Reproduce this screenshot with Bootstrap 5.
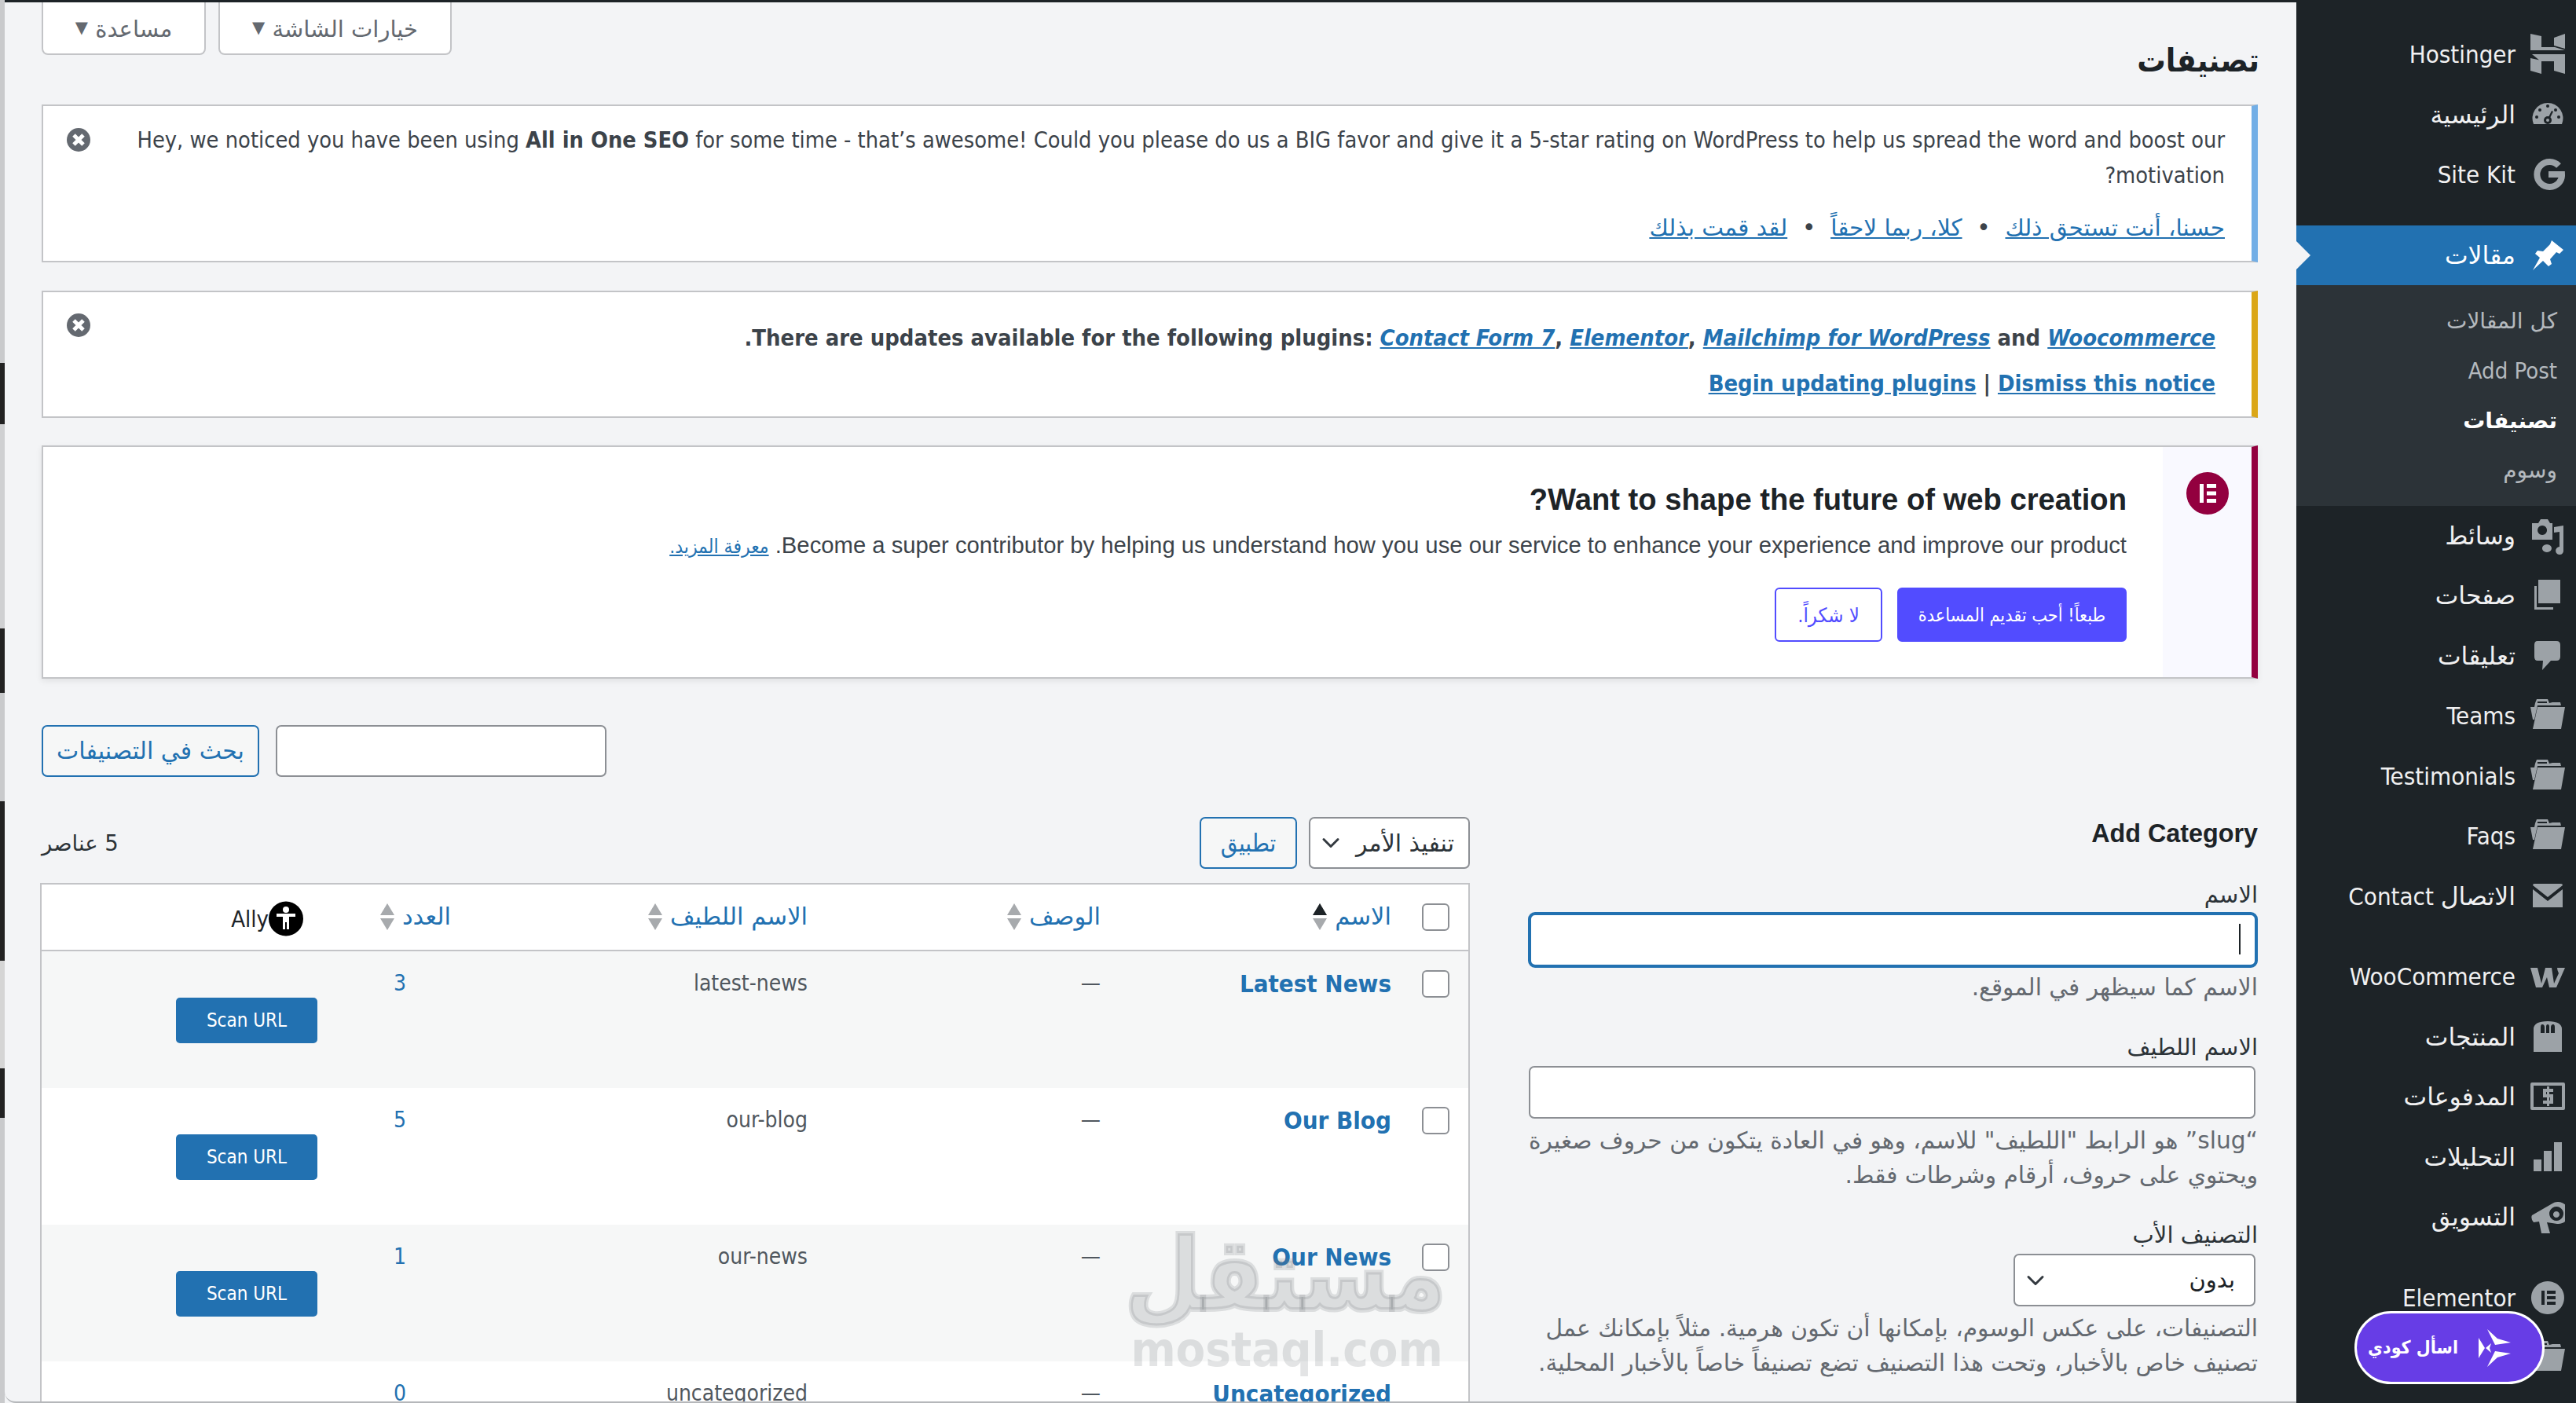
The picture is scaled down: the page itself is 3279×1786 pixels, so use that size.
<!DOCTYPE html>
<html lang="ar" dir="rtl">
<head>
  <meta charset="UTF-8">
  <title>تصنيفات</title>
  <meta name="viewport" content="width=device-width, initial-scale=1">
  <link href="https://cdn.jsdelivr.net/npm/bootstrap@5.3.3/dist/css/bootstrap.min.css" rel="stylesheet">
  <style>
    html, body { height: 100%; }
    body {
      overflow: hidden; background: #f3f4f6; color: #3c434a; position: relative;
      font: 28.72px/45px "DejaVu Sans Condensed", "DejaVu Sans", sans-serif;
    }
    a { color: #2271b1; }
    .ar { font-family: "DejaVu Sans", sans-serif; }

    /* sidebar */
    .wp-side { width: 356px; flex: none; background: #1d2327; padding-top: 31px; color: #f0f0f1; }
    .wp-item { height: 76.5px; padding-right: 14px; gap: 19px; color: #f0f0f1; text-decoration: none; font-size: 31px; line-height: 40px; white-space: nowrap; }
    .wp-item .ar { font-size: 31.5px; }
    .wp-ico { width: 44px; height: 52px; flex: none; fill: #9ca2a7; }
    .wp-gap { margin-top: 26px; }
    .wp-item.is-on { height: 76px; background: #2271b1; color: #fff; }
    .wp-item.is-on .wp-ico { fill: #fff; }
    .wp-item.is-on::after {
      content: ""; position: absolute; left: 0; top: 20px; border: solid transparent;
      border-width: 18px 0 18px 18px; border-left-color: #f3f4f6;
    }
    .wp-sub { background: #2c3338; padding: 14px 24px 13px 0; }
    .wp-sub a { display: block; height: 63.5px; line-height: 64px; font-size: 29px; color: #b4b9be; text-decoration: none; }
    .wp-sub a.ar { font-size: 28px; }
    .wp-sub a.is-on { color: #fff; font-weight: 700; }

    /* main column */
    .wp-main { flex: 1; min-width: 0; padding: 3px 49px 0 47px; border-top: 3px solid #1d2327; border-bottom: 2px solid #b5b7ba; border-bottom-left-radius: 14px; height: 100%; overflow: hidden; }
    .wp-strip { width: 6px; flex: none; background: linear-gradient(#c9cacc 0 462px, #222 462px 540px, #cfd0d2 540px 800px, #222 800px 882px, #c9cacc 882px 1020px, #222 1020px 1223px, #d5d5d5 1223px 1360px, #222 1360px 1423px, #c9cacc 1423px); }
    .wp-tab { height: 67px; margin-top: -3px; background: #fff; border: 2px solid #c3c4c7; border-top: 0; border-radius: 0 0 8px 8px; color: #646970; font-size: 29px; line-height: 64px; text-align: center; white-space: nowrap; }
    .wp-tab.opt { width: 297px; }
    .wp-tab.hlp { width: 209px; }
    .wp-tri { font-size: 21px; vertical-align: 5px; }
    .wp-title { height: 63px; line-height: 14px; font-size: 40.5px; font-weight: 700; color: #1d2327; margin: 0 -2px 0 0; }
    .wp-notice { position: relative; background: #fff; border: 2px solid #c3c4c7; border-right-width: 8px; margin-bottom: 36px; }
    .wp-notice p { margin: 0; }
    .wp-x { position: absolute; left: 29px; width: 32px; height: 32px; }
    .n-blue { border-right-color: #72aee6; padding: 21px 34px 19px 116px; }
    .n-blue .links { margin-top: 22px; font-size: 29.5px; }
    .n-yellow { border-right-color: #dba617; padding: 36px 46px 19px 60px; font-weight: 700; font-size: 28.9px; margin-bottom: 35px; }
    .n-yellow .links { margin-top: 13px; }
    .n-el { border-right-color: #93003f; font-family: "Liberation Sans", sans-serif; box-shadow: 0 3px 8px rgba(0,0,0,.08); margin-bottom: 0; height: 297px; }
    .n-el-side { width: 113px; flex: none; background: #f9f9ff; padding-top: 32px; }
    .n-el-body { padding: 45px 46px 0 0; }
    .n-el-body h3 { font-size: 38.2px; line-height: 44px; font-weight: 700; color: #1d2327; margin: 0 0 14px; font-family: inherit; }
    .n-el-body p { font-size: 29.25px; line-height: 44px; }
    .n-el-body p a { font: 24.5px "DejaVu Sans Condensed", sans-serif; }
    .n-el-btns { gap: 19px; margin-top: 32px; }
    .btn-el { height: 69px; font: 23.3px/30px "DejaVu Sans Condensed", sans-serif; width: 292px; justify-content: center; border: 2px solid #524cff; border-radius: 6px; display: flex; align-items: center; white-space: nowrap; }
    .btn-el.solid { background: #524cff; color: #fff; }
    .btn-el.line { background: #fff; color: #524cff; width: 137px; font-size: 25.5px; }

    /* wp form bits */
    .wp-btn { height: 66px; background: #f6f7f7; border: 2px solid #2271b1; border-radius: 7px; color: #2271b1; font-size: 30px; line-height: 50px; padding: 0; white-space: nowrap; }
    .wp-btn.find { width: 277px; }
    .wp-btn.apply { width: 124px; font-size: 31px; }
    .wp-input.form-control { height: 67px; border: 2px solid #8c8f94; border-radius: 7px; background: #fff; box-shadow: none; }
    .wp-search { margin: 59px 0 51px; gap: 21px; }
    .wp-search .wp-input { width: 421px; height: 66px; }
    .col-form-wp { width: 929px; flex: none; }
    .col-table-wp { width: 1818px; flex: none; margin-right: 74px; }
    .col-form-wp h2 { font: 700 32.3px/42px "Liberation Sans", sans-serif; color: #1d2327; margin: 0 0 36px; }
    .col-form-wp label { display: block; color: #2c3338; font-size: 29px; line-height: 42px; margin-bottom: 1px; }
    .wp-help + label { margin-bottom: 3px; }
    .wp-focus.form-control { height: 71px; border: 4px solid #2271b1; border-radius: 9px; box-shadow: none; width: 929px; position: relative; }
    .wp-caret { position: absolute; left: 905px; top: 15px; width: 2px; height: 39px; background: #1d2327; }
    .wp-help { color: #646970; font-size: 29.7px; line-height: 44px; margin: 6px 0 33px; }
    .position-relative + .wp-help { margin-top: 3px; }
    .wp-inset { margin-right: 3px; }
    .wp-input.form-control.wp-inset { width: 925px; }
    .wp-select.form-select { width: 308px; height: 67px; border: 2px solid #8c8f94; border-radius: 7px; color: #1d2327; font-size: 29px; padding: 0 24px 0 60px; background-position: left 14px center; background-size: 24px; }
    .wp-select.wp-bulk { width: 205px; height: 66px; padding: 0 18px 0 44px; font-size: 30px; color: #2c3338; }
    .wp-tools { height: 66px; margin-bottom: 18px; gap: 15px; }
    .wp-count { margin-right: auto; font-size: 27.5px; line-height: 66px; color: #2c3338; }

    /* categories table */
    .cat-table.table { width: 1818px; table-layout: fixed; border: 2px solid #c3c4c7; background: #fff; margin: 0; font-size: 28px; line-height: 34px; color: #50575e; }
    .cat-table.table > :not(caption) > * > * { padding: 24px 18px 0; border: 0; box-shadow: none; background: transparent; color: inherit; vertical-align: top; text-align: right; }
    .cat-table.table > :not(caption) > * > .cat-box { padding-right: 24px; }
    .cat-table thead th { height: 85px; font-weight: 400; border-bottom: 2px solid #c3c4c7 !important; }
    .cat-table thead a { text-decoration: none; display: inline-flex; align-items: center; gap: 10px; font-size: 30.5px; }
    .cat-table tbody tr:nth-child(odd) { background: #f6f7f7; }
    .cat-table .cat-name a { font-weight: 700; font-size: 31px; text-decoration: none; }
    .cat-table .cat-num { padding-right: 75px !important; }
    .cat-table .cat-ally { padding: 59px 0 57px !important; }
    .cat-table .cat-ally-th { padding-top: 21px !important; }
    .wp-check.form-check-input { width: 35px; height: 35px; margin: 0; float: none; border: 2px solid #8c8f94; border-radius: 6px; background-color: #fff; }
    .wp-scan { height: 58px; width: 180px; background: #2271b1; border: 0; border-radius: 5px; color: #fff; font-size: 24px; line-height: 58px; padding: 0; }
    .ally-head { color: #1d2327; font-size: 29px; }
    .ally-dot { width: 44px; height: 45px; }

    /* over the page */
    .kodee { position: absolute; left: 2997px; top: 1669px; width: 242px; height: 93px; background: #673de6; border: 3px solid #fff; border-radius: 47px; color: #fff; font-size: 23px; font-weight: 700; gap: 26px; padding: 0 40px 0 0; }
    .mark-wp { position: absolute; left: 1438px; top: 1558px; width: 400px; text-align: center; color: rgba(115,120,125,.2); font-weight: 700; pointer-events: none; }
    .mark-wp .big { font: 700 128px/130px "DejaVu Sans", sans-serif; transform: translateX(28px) scaleX(.875); -webkit-text-stroke: 6px rgba(115,120,125,.2); white-space: nowrap; }
    .mark-wp .url { font: 700 61px/60px "DejaVu Sans Condensed", sans-serif; direction: ltr; }
  </style>
</head>
<body class="d-flex">

<svg width="0" height="0" class="position-absolute">
  <symbol id="i-folder" viewBox="0 0 44 52"><path d="M6 10 8 5 22 5 24 10 28 9 38 9 39 13 9 13 5 31 3 31 0 15 5 15ZM9 15 44 15 39 43 3 43Z"/><path d="M9 8H21V10H9Z" fill="#1d2327"/></symbol>
  <symbol id="i-x" viewBox="0 0 32 32"><circle cx="16" cy="16" r="15" fill="#646970"/><path d="M10 10 22 22M22 10 10 22" stroke="#fff" stroke-width="5"/></symbol>
  <symbol id="i-sort" viewBox="0 0 18 34"><path d="M9 0 18 15H0Z" fill="#a7aaad"/><path d="M0 19H18L9 34Z" fill="#a7aaad"/></symbol>
</svg>

<!-- sidebar -->
<aside class="wp-side">
  <a class="wp-item d-flex align-items-center" href="#"><svg class="wp-ico" viewBox="0 0 44 52"><path d="M0 0 14 3V17H31L44 21H0ZM30 5 44 0V19L30 15ZM0 31 14 34V51L0 47ZM2 26H44V51L30 47V35H13Z"/></svg><span>Hostinger</span></a>
  <a class="wp-item d-flex align-items-center" href="#"><svg class="wp-ico" viewBox="0 0 44 52"><path d="M4 38A19.500 19.500 0 1 1 40 38Z"/><g fill="#1d2327"><circle cx="22" cy="15" r="2"/><circle cx="12" cy="20" r="2"/><circle cx="32" cy="20" r="2"/><circle cx="8" cy="29" r="2"/><circle cx="36" cy="29" r="2"/><path d="M27 21 29 22 25 30 23 29Z"/><circle cx="22" cy="33" r="5"/></g><circle cx="22" cy="33" r="2" fill="#9ca2a7"/></svg><span class="ar">الرئيسية</span></a>
  <a class="wp-item d-flex align-items-center" href="#"><svg class="wp-ico" viewBox="0 0 44 52"><path d="M36 15A16 16 0 1 0 36 37 15 15 0 0 0 40 26H23" fill="none" stroke="#9ca2a7" stroke-width="8"/></svg><span>Site Kit</span></a>

  <div class="wp-gap">
    <a class="wp-item is-on d-flex align-items-center position-relative" href="#"><svg class="wp-ico" viewBox="0 0 44 52"><path d="M27 7 42 19 37 24 33 22 25 31 27 37 23 40 16 33 3 45 12 29 6 24 9 20 16 21 25 12Z"/></svg><span class="ar">مقالات</span></a>
    <div class="wp-sub">
      <a href="#" class="ar">كل المقالات</a>
      <a href="#">Add Post</a>
      <a href="#" class="ar is-on">تصنيفات</a>
      <a href="#" class="ar">وسوم</a>
    </div>
  </div>

  <a class="wp-item d-flex align-items-center" href="#"><svg class="wp-ico" viewBox="0 0 44 52"><path fill-rule="evenodd" d="M2 10H10L13 5H22L25 10H28V31H2ZM15 13a6 6 0 1 0 .1 0Z"/><path d="M30 15 42 13V44A5 5 0 1 1 37 40V21L30 22ZM21 37a6 5 0 1 1-.1 0Z"/></svg><span class="ar">وسائط</span></a>
  <a class="wp-item d-flex align-items-center" href="#"><svg class="wp-ico" viewBox="0 0 44 52"><path d="M10 6H38V36H10Z"/><path d="M5 14H8V41H29V44H5Z"/></svg><span class="ar">صفحات</span></a>
  <a class="wp-item d-flex align-items-center" href="#"><svg class="wp-ico" viewBox="0 0 44 52"><path d="M9 7H33Q38 7 38 12V27Q38 32 33 32H26L15 44 16 32H9Q5 32 5 27V12Q5 7 9 7Z"/></svg><span class="ar">تعليقات</span></a>
  <a class="wp-item d-flex align-items-center" href="#"><svg class="wp-ico"><use href="#i-folder"/></svg><span>Teams</span></a>
  <a class="wp-item d-flex align-items-center" href="#"><svg class="wp-ico"><use href="#i-folder"/></svg><span>Testimonials</span></a>
  <a class="wp-item d-flex align-items-center" href="#"><svg class="wp-ico"><use href="#i-folder"/></svg><span>Faqs</span></a>
  <a class="wp-item d-flex align-items-center" href="#"><svg class="wp-ico" viewBox="0 0 44 52"><path d="M3 12Q3 10 5 10H39Q41 10 41 12L22 27ZM3 17 22 32 41 17V40H3Z"/></svg><span><span class="ar">الاتصال</span> Contact</span></a>

  <a class="wp-item wp-gap d-flex align-items-center" href="#"><svg class="wp-ico" viewBox="0 0 44 52"><path d="M0 15H9L14 35 19 15H27L30 35 36 22Q34 18 34 15H44L33 40H24L21 27 15 40H7Z"/></svg><span>WooCommerce</span></a>
  <a class="wp-item d-flex align-items-center" href="#"><svg class="wp-ico" viewBox="0 0 44 52"><path fill-rule="evenodd" d="M4 45V16Q4 6 22 6 40 6 40 16V45ZM13 21H18V14Q18 10 15 10 13 10 13 14ZM26 21H31V14Q31 10 29 10 26 10 26 14ZM20 21H24V13Q24 10 22 10 20 10 20 13Z"/></svg><span class="ar">المنتجات</span></a>
  <a class="wp-item d-flex align-items-center" href="#"><svg class="wp-ico" viewBox="0 0 44 52"><path fill-rule="evenodd" d="M2 8H42Q44 8 44 10V41Q44 43 42 43H2Q0 43 0 41V10Q0 8 2 8ZM4 12V39H40V12Z"/><path d="M16 16H29V20H20V23H29V35H16V31H25V27H16Z"/><path d="M21 13H24V38H21Z"/></svg><span class="ar">المدفوعات</span></a>
  <a class="wp-item d-flex align-items-center" href="#"><svg class="wp-ico" viewBox="0 0 44 52"><path d="M4 29H14V44H4ZM17 18H27V44H17ZM30 7H40V44H30Z"/></svg><span class="ar">التحليلات</span></a>
  <a class="wp-item d-flex align-items-center" href="#"><svg class="wp-ico" viewBox="0 0 44 52"><path fill-rule="evenodd" d="M2 24 28 9A14 14 0 1 1 34 35L21 33 25 47H14L11 32 4 33Q0 28 2 24ZM33 13A9 9 0 1 0 33.100 13ZM33 19A4 4 0 1 1 32.900 19Z"/></svg><span class="ar">التسويق</span></a>

  <a class="wp-item wp-gap d-flex align-items-center" href="#"><svg class="wp-ico" viewBox="0 0 44 52"><path fill-rule="evenodd" d="M22 5A21 21 0 1 1 21.900 5ZM14 17V35H18V17ZM21 17V21H32V17ZM21 24V28H32V24ZM21 31V35H32V31Z"/></svg><span>Elementor</span></a>
  <a class="wp-item d-flex align-items-center" href="#"><svg class="wp-ico"><use href="#i-folder"/></svg><span class="ar">القوالب</span></a>
</aside>

<!-- content -->
<main class="wp-main">
  <div class="d-flex gap-3 justify-content-end">
    <div class="wp-tab opt ar">خيارات الشاشة <span class="wp-tri">▼</span></div>
    <div class="wp-tab hlp ar">مساعدة <span class="wp-tri">▼</span></div>
  </div>

  <h1 class="wp-title">تصنيفات</h1>

  <div class="wp-notice n-blue">
    <svg class="wp-x" style="top:27px"><use href="#i-x"/></svg>
    <p>Hey, we noticed you have been using <strong>All in One SEO</strong> for some time - that’s awesome! Could you please do us a BIG favor and give it a 5-star rating on WordPress to help us spread the word and boost our motivation?</p>
    <p class="links ar"><a href="#">حسنا، أنت تستحق ذلك</a> &nbsp;•&nbsp; <a href="#">كلا، ربما لاحقاً</a> &nbsp;•&nbsp; <a href="#">لقد قمت بذلك</a></p>
  </div>

  <div class="wp-notice n-yellow">
    <svg class="wp-x" style="top:26px"><use href="#i-x"/></svg>
    <p>There are updates available for the following plugins: <a href="#"><em>Contact Form 7</em></a>, <a href="#"><em>Elementor</em></a>, <a href="#"><em>Mailchimp for WordPress</em></a> and <a href="#"><em>Woocommerce</em></a>.</p>
    <p class="links"><a href="#">Begin updating plugins</a> | <a href="#">Dismiss this notice</a></p>
  </div>

  <div class="wp-notice n-el d-flex">
    <div class="n-el-side d-flex justify-content-center">
      <svg width="54" height="54" viewBox="0 0 54 54"><circle cx="27" cy="27" r="27" fill="#93003f"/><path d="M17 15H22V39H17ZM26 15H38V20H26ZM26 24.500H38V29.500H26ZM26 34H38V39H26Z" fill="#fff"/></svg>
    </div>
    <div class="n-el-body flex-grow-1">
      <h3>Want to shape the future of web creation?</h3>
      <p>Become a super contributor by helping us understand how you use our service to enhance your experience and improve our product. <a href="#">معرفة المزيد.</a></p>
      <div class="d-flex n-el-btns">
        <a class="btn-el solid text-decoration-none" href="#">طبعاً! أحب تقديم المساعدة</a>
        <a class="btn-el line text-decoration-none" href="#">لا شكراً.</a>
      </div>
    </div>
  </div>

  <form class="wp-search d-flex justify-content-end">
    <input type="text" class="form-control wp-input">
    <button type="button" class="btn wp-btn find flex-none ar">بحث في التصنيفات</button>
  </form>

  <div class="d-flex">
    <section class="col-form-wp">
      <h2>Add Category</h2>
      <label for="tagName" class="ar">الاسم</label>
      <div class="position-relative">
        <input id="tagName" type="text" class="form-control wp-focus">
        <span class="wp-caret"></span>
      </div>
      <p class="wp-help ar">الاسم كما سيظهر في الموقع.</p>

      <label for="tagSlug" class="ar">الاسم اللطيف</label>
      <input id="tagSlug" type="text" class="form-control wp-input wp-inset">
      <p class="wp-help ar">“slug” هو الرابط "اللطيف" للاسم، وهو في العادة يتكون من حروف صغيرة ويحتوي على حروف، أرقام وشرطات فقط.</p>

      <label for="tagParent" class="ar">التصنيف الأب</label>
      <select id="tagParent" class="form-select wp-select wp-inset ar"><option>بدون</option></select>
      <p class="wp-help ar">التصنيفات، على عكس الوسوم، بإمكانها أن تكون هرمية. مثلاً بإمكانك عمل تصنيف خاص بالأخبار، وتحت هذا التصنيف تضع تصنيفاً خاصاً بالأخبار المحلية.</p>
    </section>

    <section class="col-table-wp">
      <div class="wp-tools d-flex">
        <select class="form-select wp-select wp-bulk ar"><option>تنفيذ الأمر</option></select>
        <button type="button" class="btn wp-btn apply">تطبيق</button>
        <span class="wp-count ar">5 عناصر</span>
      </div>
      <table class="table cat-table">
        <colgroup><col style="width:81px"><col style="width:370px"><col style="width:373px"><col style="width:454px"><col style="width:188px"><col style="width:352px"></colgroup>
        <thead>
          <tr>
            <th class="cat-box"><input type="checkbox" class="form-check-input wp-check"></th>
            <th><a href="#" class="ar">الاسم <svg width="18" height="34"><use href="#i-sort"/><path d="M9 0 18 15H0Z" fill="#1d2327"/></svg></a></th>
            <th><a href="#" class="ar">الوصف <svg width="18" height="34"><use href="#i-sort"/></svg></a></th>
            <th><a href="#" class="ar">الاسم اللطيف <svg width="18" height="34"><use href="#i-sort"/></svg></a></th>
            <th><a href="#" class="ar">العدد <svg width="18" height="34"><use href="#i-sort"/></svg></a></th>
            <th class="cat-ally-th">
              <span class="d-inline-flex align-items-center ally-head">
                <svg class="ally-dot" viewBox="0 0 44 45"><circle cx="22" cy="22.500" r="22" fill="#000"/><circle cx="22" cy="11" r="4" fill="#fff"/><path d="M10 16H34V20H26V36H23V27H21V36H18V20H10Z" fill="#fff"/></svg>
                <span>Ally</span>
              </span>
            </th>
          </tr>
        </thead>
        <tbody>
          <tr>
            <td class="cat-box"><input type="checkbox" class="form-check-input wp-check"></td>
            <td class="cat-name"><a href="#">Latest News</a></td>
            <td>—</td>
            <td>latest-news</td>
            <td class="cat-num"><a href="#" class="text-decoration-none">3</a></td>
            <td class="cat-ally"><button type="button" class="btn wp-scan">Scan URL</button></td>
          </tr>
          <tr>
            <td class="cat-box"><input type="checkbox" class="form-check-input wp-check"></td>
            <td class="cat-name"><a href="#">Our Blog</a></td>
            <td>—</td>
            <td>our-blog</td>
            <td class="cat-num"><a href="#" class="text-decoration-none">5</a></td>
            <td class="cat-ally"><button type="button" class="btn wp-scan">Scan URL</button></td>
          </tr>
          <tr>
            <td class="cat-box"><input type="checkbox" class="form-check-input wp-check"></td>
            <td class="cat-name"><a href="#">Our News</a></td>
            <td>—</td>
            <td>our-news</td>
            <td class="cat-num"><a href="#" class="text-decoration-none">1</a></td>
            <td class="cat-ally"><button type="button" class="btn wp-scan">Scan URL</button></td>
          </tr>
          <tr>
            <td class="cat-box"></td>
            <td class="cat-name"><a href="#">Uncategorized</a></td>
            <td>—</td>
            <td>uncategorized</td>
            <td class="cat-num"><a href="#" class="text-decoration-none">0</a></td>
            <td class="cat-ally"><button type="button" class="btn wp-scan">Scan URL</button></td>
          </tr>
        </tbody>
      </table>
    </section>
  </div>
</main>

<div class="wp-strip"></div>

<!-- floating bits -->
<div class="mark-wp">
  <div class="big">مستقل</div>
  <div class="url">mostaql.com</div>
</div>

<button type="button" class="btn kodee d-flex align-items-center justify-content-start">
  <svg width="41" height="48" viewBox="0 0 41 48" fill="#fff"><path d="M11 0 24 12 41 17 21 20ZM21 28 41 31 24 36 11 48ZM0 11 8 24 0 37Z M16 18 14 24 16 30 9 24Z"/></svg>
  <span>اسأل كودي</span>
</button>

</body>
</html>
